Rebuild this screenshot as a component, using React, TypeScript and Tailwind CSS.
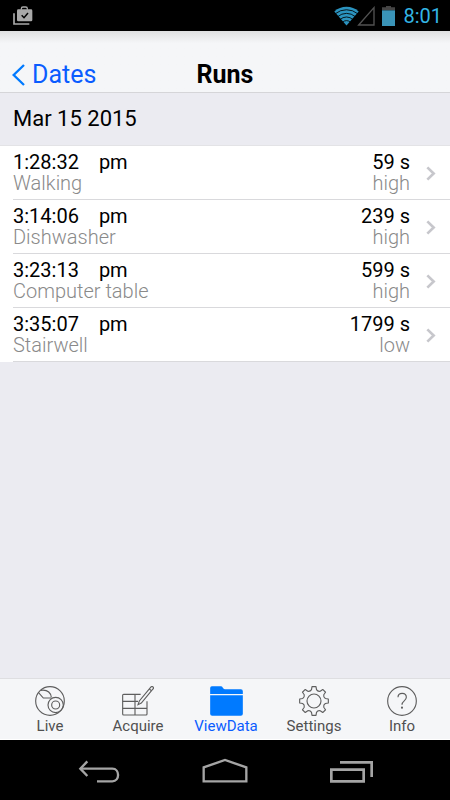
import type { ReactNode } from "react";

type Run = {
  time: string;
  meridiem: string;
  label: string;
  duration: string;
  rate: string;
};

const runs: readonly Run[] = [
  { time: "1:28:32", meridiem: "pm", label: "Walking", duration: "59 s", rate: "high" },
  { time: "3:14:06", meridiem: "pm", label: "Dishwasher", duration: "239 s", rate: "high" },
  { time: "3:23:13", meridiem: "pm", label: "Computer table", duration: "599 s", rate: "high" },
  { time: "3:35:07", meridiem: "pm", label: "Stairwell", duration: "1799 s", rate: "low" },
];

function BagIcon() {
  return (
    <svg viewBox="0 0 60 60" className="size-5" aria-hidden="true">
      <path d="M3 22v32h46" fill="none" stroke="#a9a9a9" strokeWidth="5" />
      <path d="M25 11v-3q0-5 5-5h8q5 0 5 5v3" fill="none" stroke="#a9a9a9" strokeWidth="4" />
      <rect x="12" y="10" width="46" height="36" rx="4" fill="#a9a9a9" />
      <path d="m26 28 7 7 12-14" fill="none" stroke="#000" strokeWidth="4.5" />
    </svg>
  );
}

function WifiIcon() {
  return (
    <svg viewBox="0 0 76 60" className="h-5 w-[25px]" aria-hidden="true">
      <path d="M38 59 1 16Q17 2 38 2t37 14Z" fill="#2b93bf" />
      <g fill="none" stroke="#000" strokeWidth="2.6">
        <path d="M4 23q15-12 34-12t34 12" />
        <path d="M11 32q12-10 27-10t27 10" />
        <path d="M18 41q9-8 20-8t20 8" />
        <path d="M26 49q5-5 12-5t12 5" />
      </g>
    </svg>
  );
}

function SignalIcon() {
  return (
    <svg viewBox="0 0 54 60" className="-ml-0.5 h-5 w-[18px]" aria-hidden="true">
      <path d="M5 57 51 5v52Z" fill="none" stroke="#525252" strokeWidth="4" />
    </svg>
  );
}

function BatteryIcon() {
  return (
    <svg viewBox="0 0 39 60" className="ml-[7px] h-5 w-[13px]" aria-hidden="true">
      <path d="M12 0h15v4h12v9H0V4h12Z" fill="#454545" />
      <rect y="13" width="39" height="47" fill="#3a94b8" />
    </svg>
  );
}

function LiveIcon() {
  return (
    <svg viewBox="0 0 90 90" className="size-[30px]" fill="none" stroke="#5e5e5e" strokeWidth="3.4" aria-hidden="true">
      <circle cx="45" cy="45" r="43" />
      <path d="M10 19 25 36H49" />
      <path d="M17 13C32 11 46 14 49 34" />
      <circle cx="62" cy="57" r="23" />
      <circle cx="62" cy="57" r="12" />
    </svg>
  );
}

function AcquireIcon() {
  return (
    <svg viewBox="0 0 96 90" className="h-[30px] w-8" fill="none" stroke="#5e5e5e" strokeWidth="3.4" aria-hidden="true">
      <path d="M56 25H5q-3 0-3 3v56q0 3 3 3h67q3 0 3-3V46" />
      <path d="M2 46h46M2 67h73M39 25v62" />
      <path d="m48 56 4-11 35-42q3-3 6 0t0 6L58 51Z" />
      <path d="m82 9 6 5" />
    </svg>
  );
}

function FolderIcon() {
  return (
    <svg viewBox="0 0 98 90" className="h-[30px] w-[33px]" fill="#007aff" aria-hidden="true">
      <path d="M0 24V6q0-5 5-5h27q4 0 6 4t6 5h48q6 0 6 6v8Z" />
      <path d="M0 28h98v55q0 6-6 6H6q-6 0-6-6Z" />
    </svg>
  );
}

function SettingsIcon() {
  return (
    <svg viewBox="0 0 90 90" className="size-[30px]" fill="none" stroke="#5e5e5e" strokeWidth="3.4" aria-hidden="true">
      <circle cx="45" cy="45" r="21" />
      <path
        strokeLinejoin="round"
        d="M39 2H51L52.500 11Q56.500 17.300 63.700 15.700L71.200 10.400 79.600 18.800 74.300 26.300Q72.700 33.500 79 37.500L88 39V51L79 52.500Q72.700 56.500 74.300 63.700L79.600 71.200 71.200 79.600 63.700 74.300Q56.500 72.700 52.500 79L51 88H39L37.500 79Q33.500 72.700 26.300 74.300L18.800 79.600 10.400 71.200 15.700 63.700Q17.300 56.500 11 52.500L2 51V39L11 37.500Q17.300 33.500 15.700 26.300L10.400 18.800 18.800 10.400 26.300 15.700Q33.500 17.300 37.500 11Z"
      />
    </svg>
  );
}

function InfoIcon() {
  return (
    <svg viewBox="0 0 90 90" className="size-[30px]" fill="none" stroke="#5e5e5e" strokeWidth="3.4" aria-hidden="true">
      <circle cx="45" cy="45" r="43" />
      <path d="M33 34c0-16 25-16 25 0 0 11-13 10-13 22" />
      <circle cx="45" cy="65" r="1.5" />
    </svg>
  );
}

type Tab = {
  name: string;
  icon: ReactNode;
  active?: boolean;
};

const tabs: readonly Tab[] = [
  { name: "Live", icon: <LiveIcon /> },
  { name: "Acquire", icon: <AcquireIcon /> },
  { name: "ViewData", icon: <FolderIcon />, active: true },
  { name: "Settings", icon: <SettingsIcon /> },
  { name: "Info", icon: <InfoIcon /> },
];

function StatusBar() {
  return (
    <div className="flex h-[31px] items-center bg-black pr-2 pl-[13px]">
      <BagIcon />
      <div className="ml-auto flex items-center">
        <WifiIcon />
        <SignalIcon />
        <BatteryIcon />
        <span className="ml-2 text-xl leading-6 text-[#33b5e5]">8:01</span>
      </div>
    </div>
  );
}

function Header() {
  return (
    <header className="border-b border-[#d5d5d8] bg-linear-to-b from-[#dfe0e1] to-[#f5f6f8] to-20% pt-[25px]">
      <div className="grid h-9 grid-cols-3 items-center text-[25px]">
        <a href="#dates" className="flex items-center gap-[7px] pl-3 text-[#0a5cff]">
          <svg viewBox="0 0 39 66" className="h-[22px] w-[13px]" fill="none" stroke="#007aff" strokeWidth="7" aria-hidden="true">
            <path d="M36 3 5 33l31 30" />
          </svg>
          Dates
        </a>
        <h1 className="text-center font-bold">Runs</h1>
      </div>
    </header>
  );
}

function RunRow({ run }: { run: Run }) {
  return (
    <li className="bg-white pl-[13px]">
      <button type="button" className="flex w-full items-center border-b border-[#d9d9dc] pt-1.5 pr-3.5 pb-[5px] text-xl leading-[21px]">
        <span className="flex flex-1 flex-col text-left">
          <span className="flex gap-5">
            <span>{run.time}</span>
            <span>{run.meridiem}</span>
          </span>
          <span className="font-light text-[#8a8a8a]">{run.label}</span>
        </span>
        <span className="flex flex-col text-right">
          <span>{run.duration}</span>
          <span className="font-light text-[#8a8a8a]">{run.rate}</span>
        </span>
        <svg viewBox="0 0 30 45" className="ml-4 h-[15px] w-2.5" fill="none" stroke="#c7c7cc" strokeWidth="8" aria-hidden="true">
          <path d="m4 4 19 18.500L4 41" />
        </svg>
      </button>
    </li>
  );
}

function TabBar() {
  return (
    <nav className="grid grid-cols-5 border-t border-b border-t-[#dedee1] border-b-white bg-[#f5f6f8] pt-[7px] pr-1 pb-1 pl-1.5">
      {tabs.map((tab) => (
        <button
          key={tab.name}
          type="button"
          className={`flex flex-col items-center gap-0.5 text-[15px] leading-[17px] ${
            tab.active ? "text-[#0a5cff]" : "text-[#505050]"
          }`}
        >
          {tab.icon}
          {tab.name}
        </button>
      ))}
    </nav>
  );
}

function SystemNav() {
  return (
    <div className="flex justify-center gap-[82px] bg-black py-4">
      <button type="button" aria-label="Back">
        <svg viewBox="0 0 126 84" className="h-7 w-[42px]" fill="none" stroke="#a5a5a5" strokeWidth="7">
          <path d="M6 38h97c23 0 23 38 0 38H57" />
          <path d="M28 16 7 38l21 22" />
        </svg>
      </button>
      <button type="button" aria-label="Home">
        <svg viewBox="0 0 138 84" className="h-7 w-[46px]" fill="none" stroke="#a5a5a5" strokeWidth="7">
          <path d="M5 76V34l64-22 64 22v42Z" />
        </svg>
      </button>
      <button type="button" aria-label="Recent apps">
        <svg viewBox="0 0 129 84" className="h-7 w-[43px]" fill="none" stroke="#a5a5a5" strokeWidth="8">
          <path d="M4 41h97v35H4Z" />
          <path d="M30 19h95v44" />
        </svg>
      </button>
    </div>
  );
}

export default function App() {
  return (
    <div className="flex min-h-screen flex-col bg-[#ebebf1] font-[Roboto,sans-serif] text-black">
      <StatusBar />
      <Header />
      <main className="flex-1">
        <h2 className="pl-[13px] text-[22px] leading-[52px]">Mar 15 2015</h2>
        <ul className="border-t border-[#e3e3e6]">
          {runs.map((run) => (
            <RunRow key={run.time} run={run} />
          ))}
        </ul>
      </main>
      <TabBar />
      <SystemNav />
    </div>
  );
}
